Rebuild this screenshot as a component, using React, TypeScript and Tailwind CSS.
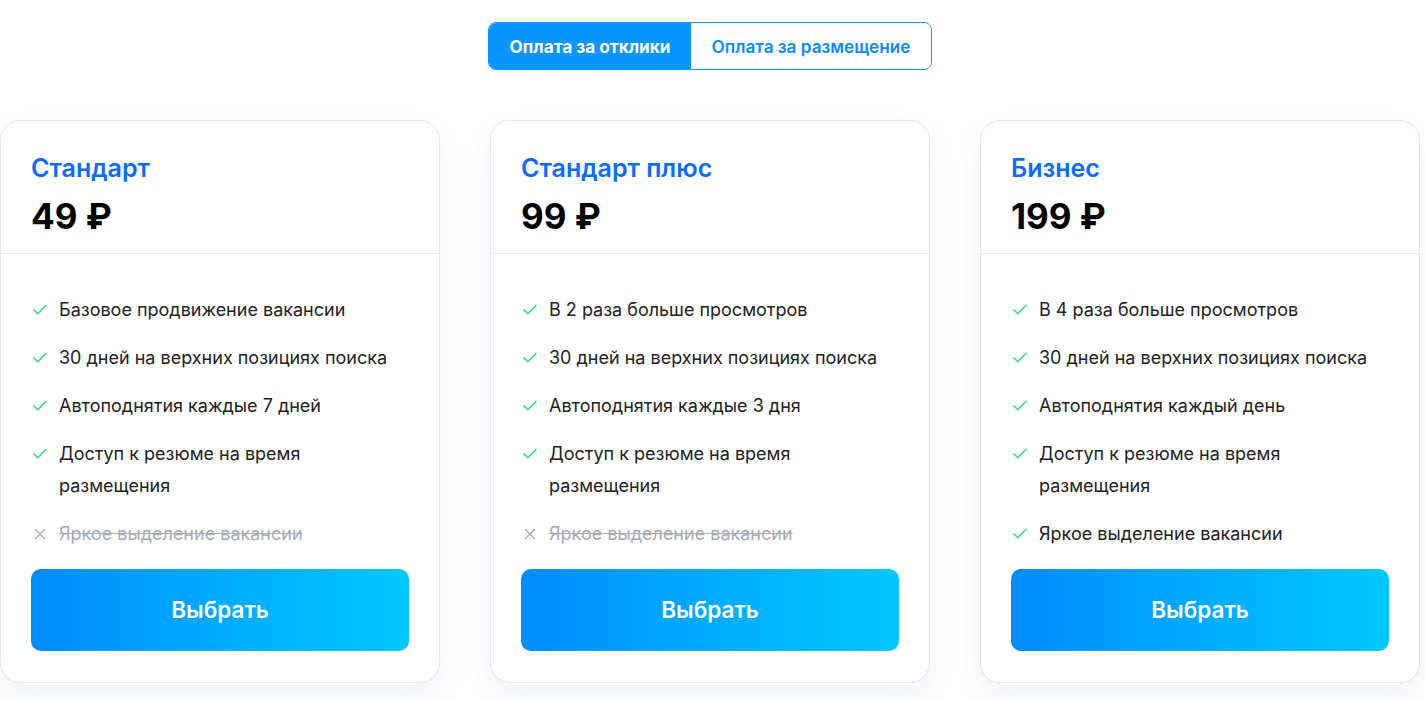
import { Check, X } from 'lucide-react';

type Feature = { text: string; on: boolean };

interface Plan {
  name: string;
  price: string;
  features: Feature[];
}

const plans: Plan[] = [
  {
    name: 'Стандарт',
    price: '49 ₽',
    features: [
      { text: 'Базовое продвижение вакансии', on: true },
      { text: '30 дней на верхних позициях поиска', on: true },
      { text: 'Автоподнятия каждые 7 дней', on: true },
      { text: 'Доступ к резюме на время размещения', on: true },
      { text: 'Яркое выделение вакансии', on: false },
    ],
  },
  {
    name: 'Стандарт плюс',
    price: '99 ₽',
    features: [
      { text: 'В 2 раза больше просмотров', on: true },
      { text: '30 дней на верхних позициях поиска', on: true },
      { text: 'Автоподнятия каждые 3 дня', on: true },
      { text: 'Доступ к резюме на время размещения', on: true },
      { text: 'Яркое выделение вакансии', on: false },
    ],
  },
  {
    name: 'Бизнес',
    price: '199 ₽',
    features: [
      { text: 'В 4 раза больше просмотров', on: true },
      { text: '30 дней на верхних позициях поиска', on: true },
      { text: 'Автоподнятия каждый день', on: true },
      { text: 'Доступ к резюме на время размещения', on: true },
      { text: 'Яркое выделение вакансии', on: true },
    ],
  },
];

function PlanCard({ plan }: { plan: Plan }) {
  return (
    <div className="w-[440px] shrink-0 rounded-[20px] border border-[#e6e8ee] bg-white shadow-[0_12px_30px_rgba(40,70,140,0.07)]">
      <div className="border-b border-[#e6e8ee] px-[30px] pt-[29px] pb-[17px]">
        <h3 className="text-[25px] leading-[36px] font-semibold text-[#0a6cff]">{plan.name}</h3>
        <div className="mt-[10px] text-[35px] leading-[40px] font-bold text-black">{plan.price}</div>
      </div>
      <div className="px-[30px] pt-[40px] pb-[31px]">
        <ul className="flex flex-col gap-[16px]">
          {plan.features.map((f) => (
            <li key={f.text} className="flex items-start">
              <span className="flex h-[32px] w-[28px] shrink-0 items-center">
                {f.on ? (
                  <Check size={18} strokeWidth={2.2} className="text-[#3ddc84]" />
                ) : (
                  <X size={18} strokeWidth={1.7} className="text-[#a8abb2]" />
                )}
              </span>
              <span
                className={
                  f.on
                    ? 'text-[18px] leading-[32px] text-[#222]'
                    : 'text-[18px] leading-[32px] text-[#a8abb2] line-through'
                }
              >
                {f.text}
              </span>
            </li>
          ))}
        </ul>
        <button className="mt-[19px] h-[82px] w-full rounded-[10px] bg-gradient-to-r from-[#008cff] to-[#00c8ff] text-[22.5px] font-semibold text-white">
          Выбрать
        </button>
      </div>
    </div>
  );
}

export default function App() {
  return (
    <div className="min-h-screen bg-white font-['Inter','Noto_Sans',sans-serif]">
      <div className="w-[1420px] pt-[22px]">
        <div className="flex justify-center">
          <div className="flex h-[48px] overflow-hidden rounded-[8px] border border-[#0a95ff]">
            <button className="w-[202px] bg-[#0a95ff] pt-[1px] text-[17.2px] font-bold text-white">
              Оплата за отклики
            </button>
            <button className="w-[240px] bg-white pt-[1px] text-[17.2px] font-semibold text-[#0a8cff]">
              Оплата за размещение
            </button>
          </div>
        </div>
        <div className="mt-[50px] flex gap-[50px]">
          {plans.map((p) => (
            <PlanCard key={p.name} plan={p} />
          ))}
        </div>
      </div>
    </div>
  );
}
